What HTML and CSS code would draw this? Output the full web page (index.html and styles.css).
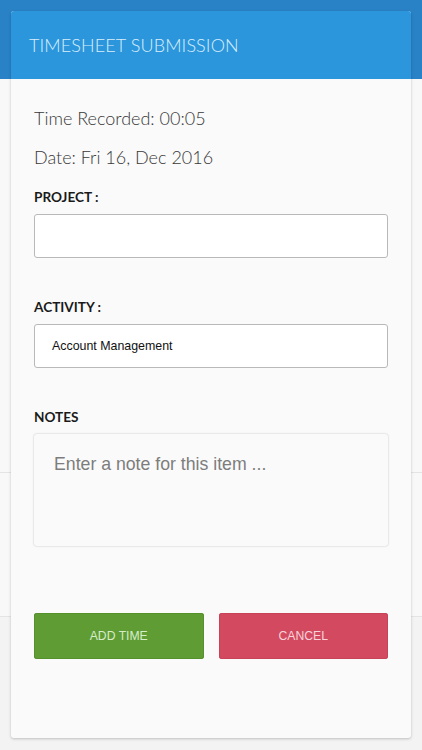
FILE: index.html
```html
<!DOCTYPE html>
<html>
<head>
<meta charset="utf-8">
<link rel="stylesheet" href="styles.css">
</head>
<body>
<div class="page">
  <div class="page-header"></div>
  <div class="page-row row-a"></div>
  <div class="page-row row-b"></div>
  <div class="page-rest"></div>
</div>
<div class="modal">
  <div class="modal-header">TIMESHEET SUBMISSION</div>
  <div class="modal-body">
    <div class="info first">Time Recorded: 00:05</div>
    <div class="info second">Date: Fri 16, Dec 2016</div>
    <div class="label l-project">PROJECT :</div>
    <div class="input"></div>
    <div class="label l-gap">ACTIVITY :</div>
    <div class="input select">Account Management</div>
    <div class="label l-gap">NOTES</div>
    <div class="textarea">Enter a note for this item ...</div>
    <div class="buttons">
      <div class="btn btn-add">ADD TIME</div>
      <div class="btn btn-cancel">CANCEL</div>
    </div>
  </div>
</div>
</body>
</html>
```
FILE: styles.css
```css
html, body { margin: 0; padding: 0; }
body { width: 422px; height: 750px; overflow: hidden; background: #f3f3f3; font-family: Lato, "Open Sans", sans-serif; }
.page { display: flex; flex-direction: column; height: 750px; }
.page-header { height: 79px; background: #2a82c6; flex: none; }
.page-row { flex: none; background: #f8f8f8; border-bottom: 1px solid #e4e4e4; }
.row-a { height: 393px; }
.row-b { height: 143px; }
.page-rest { flex: 1; background: #f3f3f3; }
.modal { position: absolute; left: 11px; top: 11px; width: 400px; height: 727px; background: #fafafa; border-radius: 3px; box-shadow: 0 1px 3px rgba(0,0,0,0.22); overflow: hidden; }
.modal-header { height: 68px; line-height: 68px; background: #2b96dc; color: #d9eefb; font-family: Lato, sans-serif; font-weight: 300; font-size: 18px; padding-left: 18px; letter-spacing: 0.1px; }
.modal-body { padding: 0 23px; }
.info { font-weight: 300; font-size: 18px; line-height: 24px; color: #383838; }
.info.first { margin-top: 27px; }
.info.second { margin-top: 15px; }
.label { font-weight: 700; font-size: 13.6px; line-height: 16px; color: #1a1a1a; margin-bottom: 9px; }
.l-project { margin-top: 20px; }
.l-gap { margin-top: 41px; }
.input { height: 42px; background: #fff; border: 1px solid #b9b9b9; border-radius: 3px; }
.select { font-family: "Liberation Sans", Arial, sans-serif; font-size: 12.4px; line-height: 42px; color: #111; padding-left: 17px; }
.textarea { height: 112px; box-sizing: border-box; background: #fafafa; border-radius: 3px; box-shadow: 0 0 2px rgba(0,0,0,0.25); font-family: "Liberation Sans", Arial, sans-serif; font-size: 17.7px; line-height: 20px; color: #7d7d7d; padding: 20px 0 0 20px; }
.buttons { display: flex; gap: 15px; margin-top: 67px; }
.btn { flex: 1; height: 46px; line-height: 46px; border-radius: 3px; text-align: center; font-family: "Liberation Sans", Arial, sans-serif; font-size: 12.2px; }
.btn-add { background: #5f9d34; color: #d7ecc9; box-shadow: inset 0 0 0 1px #54902c; }
.btn-cancel { background: #d34a60; color: #f8d2d9; box-shadow: inset 0 0 0 1px #c94358; }
```
